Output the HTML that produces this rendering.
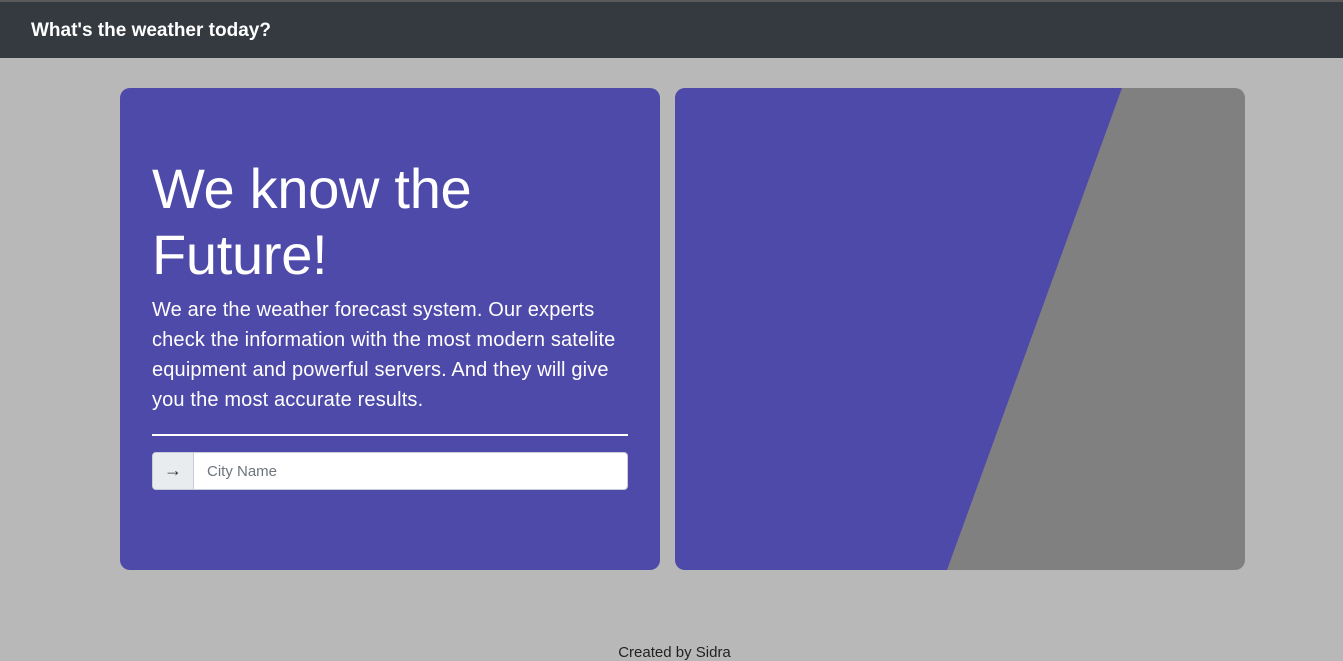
<!DOCTYPE html>
<html><head><meta charset="utf-8"><style>
*{margin:0;padding:0;box-sizing:border-box}
html,body{width:1343px;height:657px;overflow:hidden;background:#b8b8b8;font-family:"Liberation Sans",sans-serif}
.top{position:absolute;left:0;top:0;width:1343px;height:58px;background:#343a40;border-top:2px solid #5a5a5a}
.top span{position:absolute;left:31px;top:18px;color:#fff;font-weight:bold;font-size:19px}
.card1{position:absolute;left:120px;top:88px;width:540px;height:482px;background:#4e4aa9;border-radius:10px;color:#fff}
.card2{position:absolute;left:675px;top:88px;width:570px;height:482px;border-radius:10px;overflow:hidden;background:#808080}
h1{position:absolute;left:32px;top:68px;font-weight:normal;font-size:56px;line-height:66px;width:420px;letter-spacing:-0.3px}
p{position:absolute;left:32px;top:207px;width:478px;font-size:20px;line-height:30px;letter-spacing:0.15px}
.hr{position:absolute;left:32px;top:346px;width:476px;height:2px;background:#fff}
.ig{position:absolute;left:32px;top:364px;width:476px;height:38px;background:#fff;border:1px solid #c8ccd8;border-radius:4px}
.ig .b{position:absolute;left:0;top:0;width:41px;height:36px;background:#e9ecef;border-right:1px solid #c8ccd8;border-radius:3px 0 0 3px;color:#333;font-size:18px;text-align:center;line-height:34px}
.ig .t{position:absolute;left:54px;top:10px;color:#6c757d;font-size:15px}
.foot{position:absolute;left:0;width:1349px;top:644px;text-align:center;font-size:15px;color:#222}
</style></head><body>
<div class="top"><span>What's the weather today?</span></div>
<div class="card1">
<h1>We know the Future!</h1>
<p>We are the weather forecast system. Our experts check the information with the most modern satelite equipment and powerful servers. And they will give you the most accurate results.</p>
<div class="hr"></div>
<div class="ig"><div class="b">→</div><div class="t">City Name</div></div>
</div>
<div class="card2"><svg width="570" height="482" style="position:absolute;left:0;top:0"><polygon points="0,0 447,0 272,482 0,482" fill="#4e4aa9"/></svg></div>
<div class="foot">Created by Sidra</div>
</body></html>
